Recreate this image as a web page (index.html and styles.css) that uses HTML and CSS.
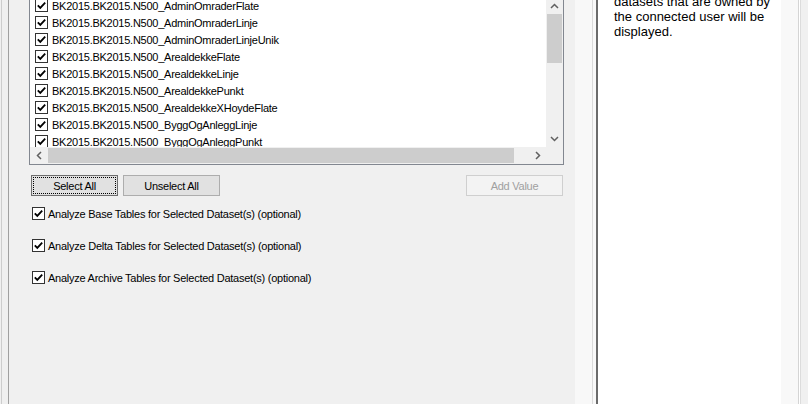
FILE: index.html
```html
<!DOCTYPE html>
<html lang="en">
<head>
    <meta charset="UTF-8">
    <meta name="viewport" content="width=device-width, initial-scale=1.0">
    <title>Analyze Datasets</title>
    <link rel="stylesheet" href="styles.css">
</head>
<body>
    <!-- shared glyphs -->
    <svg class="defs" aria-hidden="true">
        <symbol id="tick" viewBox="0 0 11 11">
            <path d="M1.8 5.3 L4.3 7.9 L9.2 2.6" fill="none" stroke="#000" stroke-width="1.8"/>
        </symbol>
        <symbol id="chev-up" viewBox="0 0 9 6">
            <path d="M1 5 L4.5 1.5 L8 5" fill="none" stroke="#606060" stroke-width="1.5"/>
        </symbol>
        <symbol id="chev-down" viewBox="0 0 9 6">
            <path d="M1 1 L4.5 4.5 L8 1" fill="none" stroke="#606060" stroke-width="1.5"/>
        </symbol>
        <symbol id="chev-left" viewBox="0 0 6 9">
            <path d="M5 1 L1.5 4.5 L5 8" fill="none" stroke="#606060" stroke-width="1.5"/>
        </symbol>
        <symbol id="chev-right" viewBox="0 0 6 9">
            <path d="M1 1 L4.5 4.5 L1 8" fill="none" stroke="#606060" stroke-width="1.5"/>
        </symbol>
    </svg>

    <div class="window">
        <div class="frame-left"></div>

        <!-- Dataset selection form -->
        <div class="form-panel">
            <div class="dataset-list">
                <div class="list-body">
                    <ul class="list-items">
                        <li class="list-item"><span class="check"><svg><use href="#tick"/></svg></span>BK2015.BK2015.N500_AdminOmraderFlate</li>
                        <li class="list-item"><span class="check"><svg><use href="#tick"/></svg></span>BK2015.BK2015.N500_AdminOmraderLinje</li>
                        <li class="list-item"><span class="check"><svg><use href="#tick"/></svg></span>BK2015.BK2015.N500_AdminOmraderLinjeUnik</li>
                        <li class="list-item"><span class="check"><svg><use href="#tick"/></svg></span>BK2015.BK2015.N500_ArealdekkeFlate</li>
                        <li class="list-item"><span class="check"><svg><use href="#tick"/></svg></span>BK2015.BK2015.N500_ArealdekkeLinje</li>
                        <li class="list-item"><span class="check"><svg><use href="#tick"/></svg></span>BK2015.BK2015.N500_ArealdekkePunkt</li>
                        <li class="list-item"><span class="check"><svg><use href="#tick"/></svg></span>BK2015.BK2015.N500_ArealdekkeXHoydeFlate</li>
                        <li class="list-item"><span class="check"><svg><use href="#tick"/></svg></span>BK2015.BK2015.N500_ByggOgAnleggLinje</li>
                        <li class="list-item"><span class="check"><svg><use href="#tick"/></svg></span>BK2015.BK2015.N500_ByggOgAnleggPunkt</li>
                        <li class="list-item"><span class="check"><svg><use href="#tick"/></svg></span>BK2015.BK2015.N500_ByggOgAnleggFlate</li>
                    </ul>
                    <div class="vscroll">
                        <div class="scroll-btn"><svg class="chev-v"><use href="#chev-up"/></svg></div>
                        <div class="vthumb"></div>
                        <div class="scroll-track"></div>
                        <div class="scroll-btn"><svg class="chev-v"><use href="#chev-down"/></svg></div>
                    </div>
                </div>
                <div class="hscroll">
                    <div class="scroll-btn"><svg class="chev-h"><use href="#chev-left"/></svg></div>
                    <div class="hthumb"></div>
                    <div class="scroll-track"></div>
                    <div class="scroll-btn"><svg class="chev-h"><use href="#chev-right"/></svg></div>
                    <div class="scroll-corner"></div>
                </div>
            </div>

            <div class="button-row">
                <button class="btn btn-focus"><span class="focus-rect">Select All</span></button>
                <button class="btn btn-unselect">Unselect All</button>
                <button class="btn btn-add" disabled>Add Value</button>
            </div>

            <div class="options">
                <label class="option"><span class="check"><svg><use href="#tick"/></svg></span>Analyze Base Tables for Selected Dataset(s) (optional)</label>
                <label class="option"><span class="check"><svg><use href="#tick"/></svg></span>Analyze Delta Tables for Selected Dataset(s) (optional)</label>
                <label class="option"><span class="check"><svg><use href="#tick"/></svg></span>Analyze Archive Tables for Selected Dataset(s) (optional)</label>
            </div>
        </div>

        <!-- Help pane -->
        <div class="side">
            <div class="side-gutter"></div>
            <div class="help">
                <p class="help-text">datasets that are owned by<br>the connected user will be<br>displayed.</p>
            </div>
            <div class="help-gutter"></div>
            <div class="frame-right"></div>
        </div>
    </div>
</body>
</html>
```

FILE: styles.css
```css
* {
    margin: 0;
    padding: 0;
    box-sizing: border-box;
}

body {
    font-family: "Liberation Sans", Arial, sans-serif;
    font-size: 11px;
    letter-spacing: -0.25px;
    color: #000;
    background-color: #f0f0f0;
    overflow: hidden;
}

.defs {
    width: 0;
    height: 0;
    overflow: hidden;
    display: block;
}

.window {
    display: flex;
    width: 808px;
    height: 404px;
    overflow: hidden;
}

.frame-left {
    width: 7px;
    margin-left: 1px;
    border-left: 1px solid #cdcdcd;
}

.form-panel {
    flex: 0 0 567px;
    border-left: 1px solid #a0a0a0;
    padding-left: 20px;
}

/* checked list box */
.dataset-list {
    width: 535px;
    margin-top: -4px;
    border: 1px solid #828790;
    background-color: #fff;
}

.list-body {
    display: flex;
    height: 150px;
}

.list-items {
    list-style: none;
    flex: 1;
    overflow: hidden;
    white-space: nowrap;
}

.list-item {
    display: flex;
    align-items: center;
    height: 17px;
    padding-left: 5px;
}

.check {
    flex: 0 0 13px;
    width: 13px;
    height: 13px;
    border: 1px solid #333;
    background-color: #fff;
    margin-right: 4px;
    display: flex;
}

.check svg {
    width: 11px;
    height: 11px;
}

.vscroll {
    width: 17px;
    display: flex;
    flex-direction: column;
    background-color: #f0f0f0;
}

.scroll-btn {
    flex: 0 0 17px;
    width: 17px;
    height: 17px;
    display: flex;
    align-items: center;
    justify-content: center;
}

.chev-v {
    width: 9px;
    height: 6px;
}

.chev-h {
    width: 6px;
    height: 9px;
}

.vthumb {
    height: 49px;
    margin: 0 1px;
    background-color: #cdcdcd;
}

.scroll-track {
    flex: 1;
}

.hscroll {
    display: flex;
    height: 17px;
    background-color: #f0f0f0;
}

.hthumb {
    width: 466px;
    margin: 1px 0 1px 1px;
    background-color: #cdcdcd;
}

.scroll-corner {
    width: 17px;
}

/* buttons */
.button-row {
    display: flex;
    width: 535px;
    margin-top: 10px;
    padding-left: 2px;
    height: 21px;
}

.btn {
    font-family: inherit;
    font-size: 11px;
    letter-spacing: -0.25px;
    color: #000;
    background-color: #e1e1e1;
    border: 1px solid #adadad;
    height: 21px;
}

.btn-focus {
    width: 87px;
    padding: 1px;
    border-color: #6d6d6d;
}

.focus-rect {
    display: flex;
    align-items: center;
    justify-content: center;
    height: 100%;
    border: 1px dotted #000;
}

.btn-unselect {
    width: 97px;
    margin-left: 5px;
}

.btn-add {
    width: 97px;
    margin-left: auto;
    margin-right: 1px;
    color: #a0a0a0;
    background-color: #f3f3f3;
    border-color: #cfcfcf;
}

/* analyze options */
.options {
    display: flex;
    flex-direction: column;
    gap: 19px;
    margin-top: 11px;
    padding-left: 3px;
}

.option {
    display: flex;
    align-items: center;
    height: 13px;
    white-space: nowrap;
}

.option .check {
    margin-right: 3px;
}

/* help pane */
.side {
    flex: 1;
    display: flex;
    background-color: #f8f8f8;
}

.side-gutter {
    width: 18px;
    border-right: 1px solid #dadada;
}

.help {
    width: 185px;
    margin-left: 3px;
    border-left: 2px solid #6b6b6b;
    background-color: #fff;
    padding-left: 16px;
}

.help-text {
    font-size: 13px;
    letter-spacing: 0;
    line-height: 15px;
    margin-top: -6px;
    color: #000;
}

.help-gutter {
    width: 17px;
}

.frame-right {
    flex: 1;
    border-left: 1px solid #d4d4d4;
    box-shadow: inset 1px 0 0 #fff, inset 2px 0 0 #dcdcdc;
    background-color: #f0f0f0;
}
```
